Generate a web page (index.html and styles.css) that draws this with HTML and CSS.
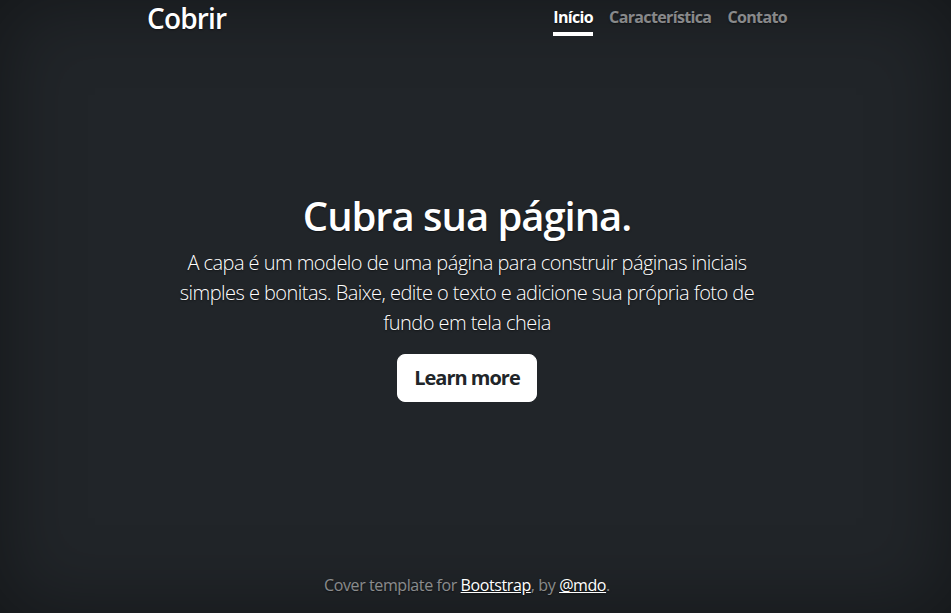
FILE: index.html
```
<!doctype html>
<html lang="pt-br">
<head>
<meta charset="utf-8">
<title>Cobrir</title>
<link rel="stylesheet" href="styles.css">
</head>
<body>
<div class="cover">
  <header class="masthead">
    <h3 class="brand">Cobrir</h3>
    <nav class="nav">
      <a class="nav-link active" href="#">Início</a>
      <a class="nav-link" href="#">Característica</a>
      <a class="nav-link" href="#">Contato</a>
    </nav>
  </header>
  <main class="hero">
    <h1 class="title">Cubra sua página.</h1>
    <p class="lead">A capa é um modelo de uma página para construir páginas iniciais simples e bonitas. Baixe, edite o texto e adicione sua própria foto de fundo em tela cheia</p>
    <p class="lead"><a class="btn" href="#">Learn more</a></p>
  </main>
  <footer class="footer">
    <p class="footer-text">Cover template for <a class="footer-link" href="#">Bootstrap</a>, by <a class="footer-link" href="#">@mdo</a>.</p>
  </footer>
</div>
</body>
</html>
```
FILE: styles.css
```
html, body {
  height: 100%;
  margin: 0;
}
body {
  box-sizing: border-box;
  display: flex;
  padding-right: 17px;
  background-color: #212529;
  color: #fff;
  font-family: "Open Sans", "Noto Sans", sans-serif;
  font-size: 16px;
  line-height: 1.5;
  letter-spacing: -0.025em;
  text-align: center;
  text-shadow: 0 .05rem .1rem rgba(0, 0, 0, .5);
  box-shadow: inset 0 0 5rem rgba(0, 0, 0, .4);
}
.cover {
  box-sizing: border-box;
  display: flex;
  flex-direction: column;
  width: 100%;
  max-width: 42em;
  margin: 0 auto;
  padding: 0 16px;
}
.masthead {
  display: flex;
  justify-content: space-between;
  align-items: flex-start;
  margin-bottom: auto;
}
.brand {
  margin: 0;
  padding-top: 2px;
  font-size: 28px;
  font-weight: 600;
  line-height: 32px;
  letter-spacing: -0.03em;
}
.nav {
  display: flex;
  gap: 16px;
}
.nav-link {
  padding: 5px 0 3px;
  font-weight: 700;
  letter-spacing: -0.04em;
  color: rgba(255, 255, 255, .5);
  text-decoration: none;
  border-bottom: 4px solid transparent;
}
.nav-link.active {
  color: #fff;
  border-bottom-color: #fff;
}
.hero {
  padding: 0 16px;
}
.title {
  margin: 0 0 8px;
  font-size: 40px;
  font-weight: 600;
  line-height: 1.2;
  letter-spacing: -0.026em;
}
.lead {
  margin: 0 0 16px;
  font-size: 20px;
  font-weight: 300;
  letter-spacing: -0.027em;
}
.btn {
  display: inline-block;
  padding: 8px 16px;
  font-size: 20px;
  font-weight: 700;
  line-height: 1.5;
  letter-spacing: -0.05em;
  color: #212529;
  background-color: #fff;
  border: 1px solid #fff;
  border-radius: 8px;
  text-decoration: none;
  text-shadow: none;
}
.footer {
  margin-top: auto;
  color: rgba(255, 255, 255, .5);
}
.footer-text {
  margin: 0 0 16px;
}
.footer-link {
  color: #fff;
}
```
